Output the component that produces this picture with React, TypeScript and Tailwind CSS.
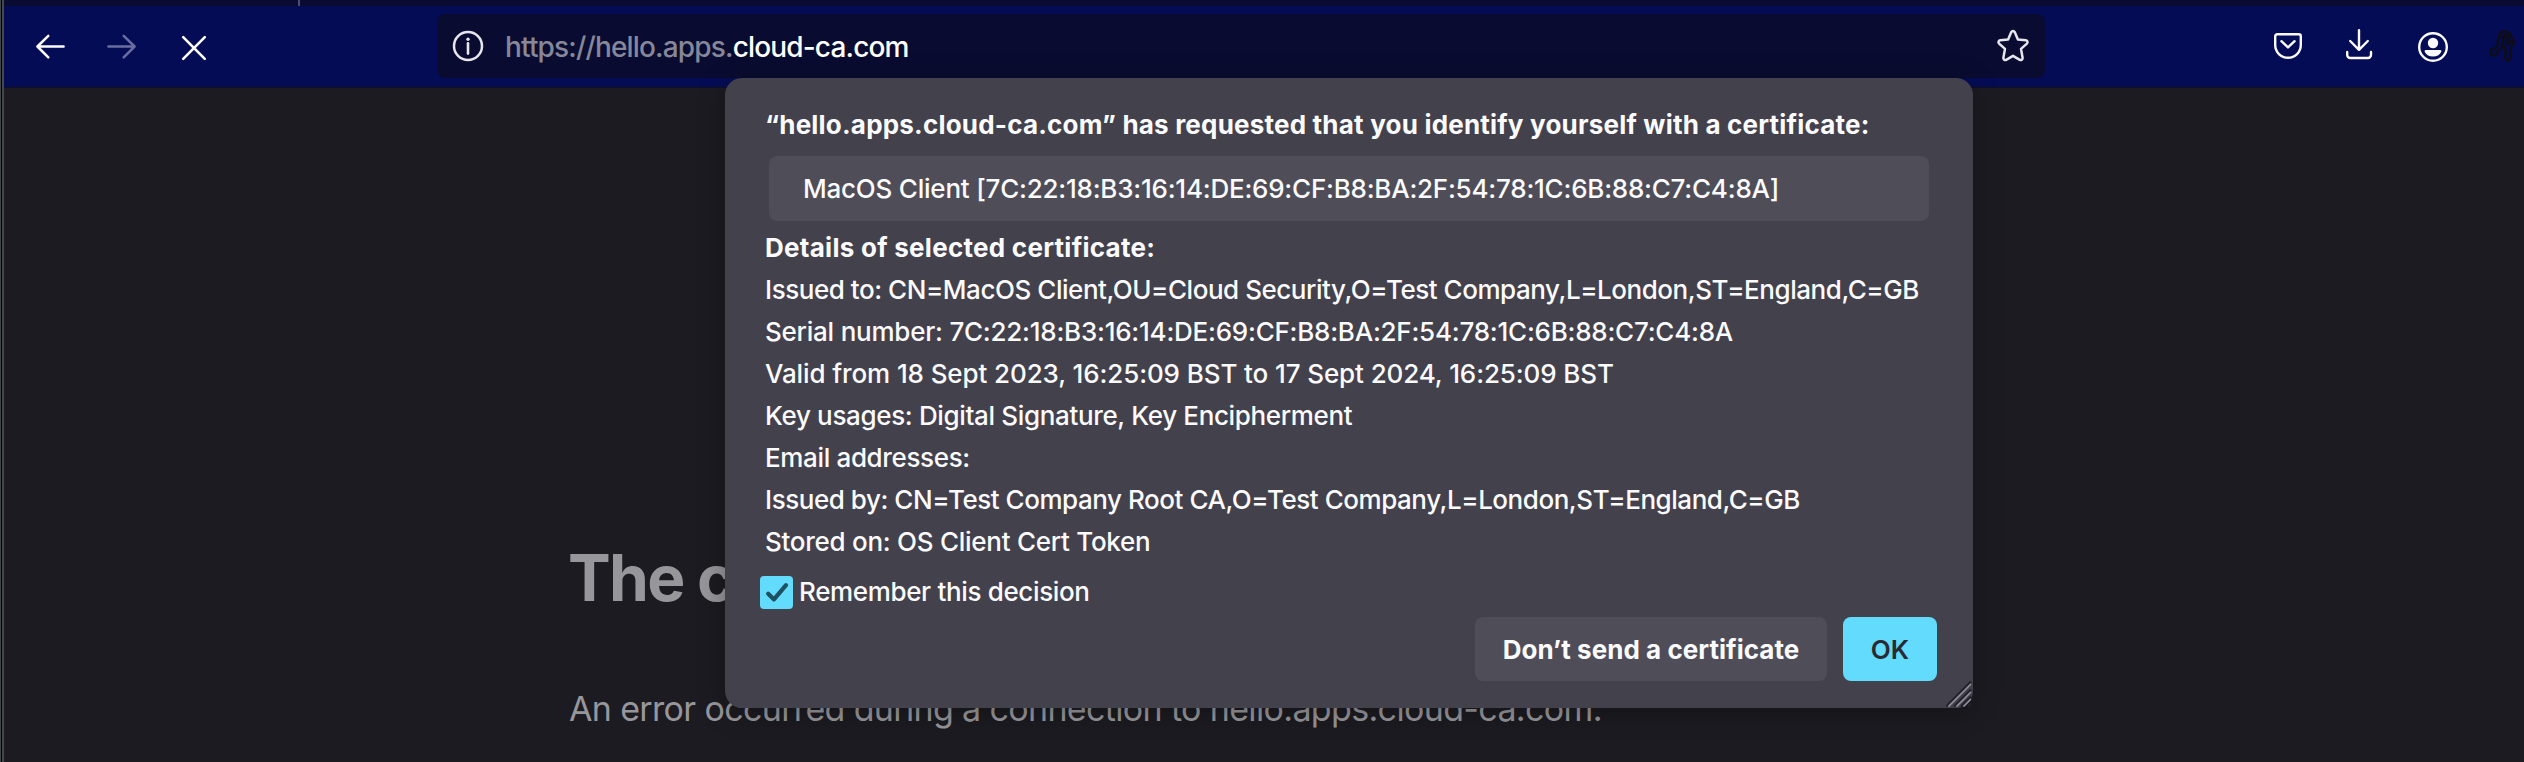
const Stroke = "fill-none stroke-current [stroke-linecap:round] [stroke-linejoin:round]";

function BackIcon() {
  return (
    <svg width="32" height="28" viewBox="0 0 32 28" className={Stroke} strokeWidth="2.5">
      <path d="M14.3 2.8 3.4 13.5 14.3 24.4M3.6 13.5H29.6" />
    </svg>
  );
}

function ForwardIcon() {
  return (
    <svg width="32" height="28" viewBox="0 0 32 28" className={Stroke} strokeWidth="2.5">
      <path d="M17.7 2.8 28.6 13.5 17.7 24.4M28.4 13.5H2.4" />
    </svg>
  );
}

function StopIcon() {
  return (
    <svg width="28" height="28" viewBox="0 0 28 28" className={Stroke} strokeWidth="2.6">
      <path d="M3.2 3.2 24.8 24.8M24.8 3.2 3.2 24.8" />
    </svg>
  );
}

function InfoIcon() {
  return (
    <svg width="32" height="32" viewBox="0 0 32 32" className="fill-none stroke-current">
      <circle cx="16" cy="16" r="14" strokeWidth="2.5" />
      <path d="M16 13.2V23.6" strokeWidth="2.6" strokeLinecap="round" />
      <circle cx="16" cy="9.2" r="1.7" className="fill-current stroke-none" />
    </svg>
  );
}

function StarIcon() {
  return (
    <svg width="34" height="34" viewBox="0 0 34 34" className={Stroke} strokeWidth="2.5">
      <path d="M15.3 3.1a1.9 1.9 0 0 1 3.4 0l3.2 7.4 8 .8a1.9 1.9 0 0 1 1 3.3l-5.9 5.3 1.6 8.9a1.9 1.9 0 0 1-2.8 2L17 26.8l-6.8 4a1.9 1.9 0 0 1-2.8-2L9 19.9l-5.9-5.3a1.9 1.9 0 0 1 1-3.3l8-.8z" />
    </svg>
  );
}

function PocketIcon() {
  return (
    <svg width="32" height="32" viewBox="0 0 32 32" className={Stroke} strokeWidth="2.4">
      <path d="M5.2 4.2H26.8a2 2 0 0 1 2 2V15a12.8 12.8 0 0 1-25.6 0V6.2a2 2 0 0 1 2-2Z" />
      <path d="M9.4 11.2 16 17.4 22.6 11.2" />
    </svg>
  );
}

function DownloadIcon() {
  return (
    <svg width="32" height="32" viewBox="0 0 32 32" className={Stroke} strokeWidth="2.4">
      <path d="M16 2.2V21.4M7.2 13 16 21.8 24.8 13M4.2 24V27a3 3 0 0 0 3 3H25a3 3 0 0 0 3-3V24" />
    </svg>
  );
}

function AccountIcon() {
  return (
    <svg width="32" height="32" viewBox="0 0 32 32" className="fill-current">
      <circle cx="16" cy="16" r="13.8" className="fill-none stroke-current" strokeWidth="2.4" />
      <circle cx="16" cy="12" r="5.2" />
      <path d="M8.8 19H23.2a1.2 1.2 0 0 1 1.2 1.5C23.2 23.6 20.2 25.5 16 25.5S8.8 23.6 7.6 20.5A1.2 1.2 0 0 1 8.8 19Z" />
    </svg>
  );
}

function KeysIcon() {
  return (
    <svg width="28" height="34" viewBox="0 0 28 34" className={Stroke} strokeWidth="2.5">
      <path d="M10 9C9.5 4.5 13 2 16.5 2.4c2.8.3 4.8 1.9 5.7 4.3" />
      <path d="M13 8.5c1.2-2.4 4-3.2 6.5-2.2" />
      <path d="M19 7.2a5.6 6.2 0 0 0-5.6 6.3c.2 2.3 1.3 3.8 3 4.7l-.6 3.6 1.5 2-1.4 2.6.4 3.2 2.2 2.4 2.6-2.4.5-11.2c2-1.4 3.2-3.2 3-5.8-.3-3.3-2.6-5.5-5.6-5.4Z" />
      <circle cx="19" cy="12.7" r="2" />
      <path d="M10 9 8.6 12.8l1.2 2.2-4.6 5-3.2 1L1.8 26l3.6.4 3-2.6.4-2.2 2-.6 3.4-4.5" />
    </svg>
  );
}

function ResizeGrip() {
  return (
    <svg width="26" height="26" viewBox="0 0 26 26" className="absolute bottom-px right-px fill-none">
      <path d="M0 25.5 25 .5M8 25.5 25 8.5M15 25.5 25 15.5M22 25.5 25 22.5" stroke="#24232d" strokeWidth="2.2" />
      <path d="M2.5 25.5 25 3M10.5 25.5 25 11M17.5 25.5 25 18" stroke="#918f99" strokeWidth="1.7" />
    </svg>
  );
}

const details = [
  { text: "Issued to: CN=MacOS Client,OU=Cloud Security,O=Test Company,L=London,ST=England,C=GB", tracking: "tracking-[-0.455px]" },
  { text: "Serial number: 7C:22:18:B3:16:14:DE:69:CF:B8:BA:2F:54:78:1C:6B:88:C7:C4:8A", tracking: "tracking-[-0.23px]" },
  { text: "Valid from 18 Sept 2023, 16:25:09 BST to 17 Sept 2024, 16:25:09 BST", tracking: "tracking-[-0.105px]" },
  { text: "Key usages: Digital Signature, Key Encipherment", tracking: "tracking-[-0.35px]" },
  { text: "Email addresses:", tracking: "tracking-[-0.35px]" },
  { text: "Issued by: CN=Test Company Root CA,O=Test Company,L=London,ST=England,C=GB", tracking: "tracking-[-0.455px]" },
  { text: "Stored on: OS Client Cert Token", tracking: "tracking-[-0.27px]" },
];

function Toolbar() {
  return (
    <nav className="flex h-[82px] shrink-0 border-b-2 border-[#0b0e38] bg-[#050c56] pt-2 text-[#fbfbfe]">
      <div className="flex h-16 w-[433px] shrink-0 items-center">
        <button className="ml-[30px] mt-0.5"><BackIcon /></button>
        <button className="ml-[40px] mt-0.5 text-[#6a6d9f]"><ForwardIcon /></button>
        <button className="ml-[42px] mt-1"><StopIcon /></button>
      </div>
      <div className="flex h-16 w-[1608px] shrink-0 items-center rounded-lg bg-[#090c30]">
        <span className="ml-[15px] text-[#e6e6ec]"><InfoIcon /></span>
        <span className="ml-[21px] mt-0.5 whitespace-nowrap text-[28px] font-medium leading-[44px] tracking-[-0.84px] text-white">
          <span className="text-[#868799]">https://hello.apps.</span>cloud-ca.com
        </span>
        <span className="ml-auto mr-[15px] text-[#e6e6ec]"><StarIcon /></span>
      </div>
      <div className="flex h-16 items-center">
        <span className="ml-[227px]"><PocketIcon /></span>
        <span className="ml-[39px] mb-1"><DownloadIcon /></span>
        <span className="ml-[42px] mt-0.5"><AccountIcon /></span>
        <span className="ml-[40px] text-[#0d0d18]"><KeysIcon /></span>
      </div>
    </nav>
  );
}

function CertificateDialog() {
  return (
    <div className="absolute left-[725px] top-[78px] flex h-[630px] w-[1248px] flex-col rounded-[17px] bg-[#43414c] pt-[31px] text-[26px] font-[450] text-[#fbfbfe] shadow-[0_4px_28px_rgba(0,0,0,0.3)]">
      <h2 className="ml-10 whitespace-nowrap font-bold leading-8 tracking-[0.2px]">
        “hello.apps.cloud-ca.com” has requested that you identify yourself with a certificate:
      </h2>
      <div className="ml-11 mt-[15px] flex h-[65px] w-[1160px] items-center whitespace-nowrap rounded-lg bg-[#4f4d58] pl-[34px] tracking-[-0.22px]">
        MacOS Client [7C:22:18:B3:16:14:DE:69:CF:B8:BA:2F:54:78:1C:6B:88:C7:C4:8A]
      </div>
      <div className="ml-10 mt-1.5 whitespace-nowrap leading-[42px]">
        <p className="font-bold tracking-[0.27px]">Details of selected certificate:</p>
        {details.map((d) => (
          <p key={d.text} className={d.tracking}>{d.text}</p>
        ))}
      </div>
      <label className="ml-[35px] mt-[13px] flex h-[33px] items-center">
        <span className="flex size-[33px] items-center justify-center rounded bg-[#62dbfc]">
          <svg width="33" height="33" viewBox="0 0 33 33" className={Stroke} strokeWidth="4.2">
            <path d="M8.2 17.8 14 23.4 26 9.2" className="stroke-[#1d5060]" />
          </svg>
        </span>
        <span className="mb-0.5 ml-1.5 leading-8 tracking-[-0.35px]">Remember this decision</span>
      </label>
      <div className="mr-9 mt-2 flex h-16 justify-end gap-4">
        <button className="w-[352px] whitespace-nowrap rounded-lg bg-[#4f4d58] font-bold tracking-[0.04px]">Don’t send a certificate</button>
        <button className="w-[94px] rounded-lg bg-[#62dbfc] font-semibold text-[#2b2a33]">OK</button>
      </div>
      <ResizeGrip />
    </div>
  );
}

export default function App() {
  return (
    <div className="relative flex h-[762px] w-[2524px] overflow-hidden bg-[#1c1b21] font-['Inter','Liberation_Sans',sans-serif]">
      <div className="w-0.5 shrink-0 border-l border-[#3c4747] bg-black" />
      <div className="w-0.5 shrink-0 bg-[#47464f]" />
      <div className="flex min-w-0 flex-1 flex-col">
        <div className="flex h-1.5 shrink-0 bg-[#090b30]">
          <div className="ml-[294px] w-0.5 bg-[#4b4d73]" />
        </div>
        <Toolbar />
        <main className="pl-[564px] text-[#97969b]">
          <h1 className="mt-[450px] whitespace-nowrap text-[64px] font-bold leading-[80px] tracking-[-1.7px]">The connection</h1>
          <p className="mt-[61px] whitespace-nowrap pl-px text-[34px] leading-[60px] tracking-[-0.65px]">
            An error occurred during a connection to hello.apps.cloud-ca.com.
          </p>
        </main>
      </div>
      <CertificateDialog />
    </div>
  );
}
